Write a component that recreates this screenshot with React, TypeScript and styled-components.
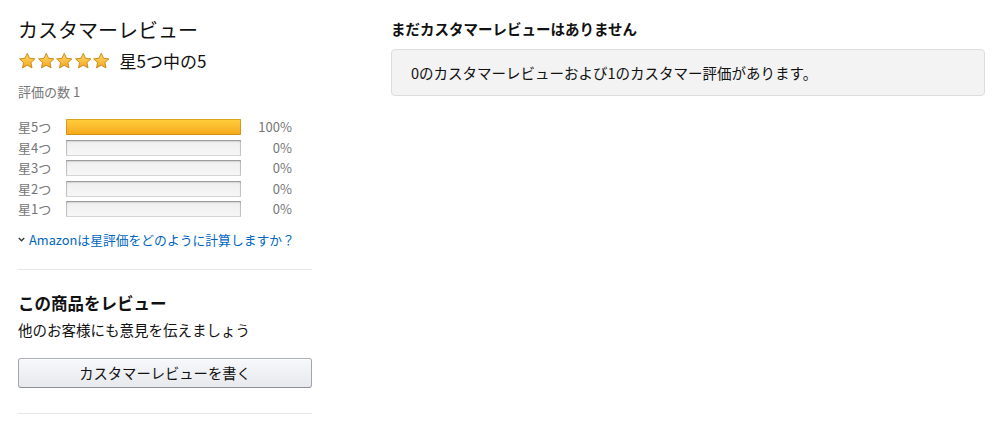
import React from 'react';
import styled, { createGlobalStyle } from 'styled-components';

const GlobalStyle = createGlobalStyle`
    body {
        margin: 0;
        background: #fff;
        font-family: 'Noto Sans CJK JP', 'Noto Sans', 'Liberation Sans', sans-serif;
        color: #111;
    }
`;

interface FillProps {
    percent: number;
}

const Page = styled.div`
    display: flex;
    flex-direction: row;
    align-items: flex-start;
    gap: 79px;
    padding: 16px 0 0 18px;
    width: 999px;
    height: 425px;
    box-sizing: border-box;
    overflow: hidden;
`;

const LeftColumn = styled.div`
    display: flex;
    flex-direction: column;
    width: 294px;
    flex-shrink: 0;
`;

const RightColumn = styled.div`
    display: flex;
    flex-direction: column;
    width: 594px;
`;

const Title = styled.h2`
    margin: 0;
    font-size: 20px;
    line-height: 28px;
    font-weight: 400;
    color: #111;
`;

const RatingRow = styled.div`
    display: flex;
    flex-direction: row;
    align-items: center;
    height: 24px;
    margin-top: 5px;
`;

const Stars = styled.div`
    display: flex;
    flex-direction: row;
    margin-right: 9px;
`;

const RatingText = styled.span`
    font-size: 17px;
    line-height: 24px;
    color: #111;
`;

const CountText = styled.div`
    margin-top: 9px;
    font-size: 13px;
    line-height: 20px;
    color: #767676;
`;

const Histogram = styled.div`
    display: flex;
    flex-direction: column;
    margin-top: 15px;
`;

const HistRow = styled.div`
    display: grid;
    grid-template-columns: 48px 175px 51px;
    align-items: center;
    height: 20.5px;
`;

const HistLabel = styled.span`
    font-size: 13px;
    line-height: 16px;
    color: #767676;
`;

const Meter = styled.div`
    height: 16px;
    box-sizing: border-box;
    border-radius: 1px;
    background: linear-gradient(to bottom, #eeeeee, #f7f7f7);
    box-shadow: inset 0 1px 2px rgba(0, 0, 0, 0.35), inset 0 0 0 1px rgba(0, 0, 0, 0.12);
    overflow: hidden;
`;

const MeterFill = styled.div<FillProps>`
    height: 100%;
    width: ${({ percent }) => percent}%;
    background: linear-gradient(to bottom, #ffce3d, #f6a81c);
    box-shadow: inset 0 0 0 1px rgba(170, 110, 0, 0.45);
    border-radius: 1px;
`;

const HistPercent = styled.span`
    text-align: right;
    font-size: 13px;
    line-height: 16px;
    color: #767676;
`;

const HowLink = styled.a`
    display: flex;
    flex-direction: row;
    align-items: center;
    gap: 4px;
    margin-top: 10px;
    font-size: 12.8px;
    line-height: 20px;
    color: #0066c0;
    text-decoration: none;
    cursor: pointer;
`;

const Divider = styled.hr`
    margin: 0;
    border: 0;
    height: 1px;
    background: #e7e7e7;
    width: 100%;
`;

const TopDivider = styled(Divider)`
    margin-top: 19px;
`;

const BottomDivider = styled(Divider)`
    margin-top: 25px;
`;

const SectionTitle = styled.h3`
    margin: 21px 0 0;
    font-size: 16.5px;
    line-height: 24px;
    font-weight: 700;
    color: #111;
`;

const SectionText = styled.div`
    margin-top: 4px;
    font-size: 14.5px;
    line-height: 22px;
    color: #111;
`;

const WriteButton = styled.button`
    margin-top: 17px;
    width: 100%;
    height: 30px;
    border: 1px solid;
    border-color: #adb1b8 #a2a6ac #8d9096;
    border-radius: 3px;
    background: linear-gradient(to bottom, #f7f8fa, #e7e9ec);
    box-shadow: inset 0 1px 0 rgba(255, 255, 255, 0.6);
    font-family: inherit;
    font-size: 14.3px;
    color: #111;
    cursor: pointer;
`;

const NoReviewTitle = styled.h3`
    margin: 2px 0 0;
    font-size: 14.5px;
    line-height: 22px;
    font-weight: 700;
    color: #111;
`;

const InfoBox = styled.div`
    margin-top: 9px;
    padding: 12px 19px;
    border: 1px solid #dddddd;
    border-radius: 4px;
    background: #f3f3f3;
    font-size: 14.5px;
    line-height: 21px;
    color: #111;
`;

const StarIcon: React.FC = () => (
    <svg width="18.5" height="18" viewBox="0 0 24 24">
        <defs>
            <linearGradient id="starFill" x1="0" y1="0" x2="0" y2="1">
                <stop offset="0" stopColor="#ffd964" />
                <stop offset="1" stopColor="#f3a722" />
            </linearGradient>
        </defs>
        <path
            d="M12 1.8l3.05 6.55 7.15.85-5.3 4.9 1.42 7.08L12 17.6l-6.32 3.58 1.42-7.08-5.3-4.9 7.15-.85z"
            fill="url(#starFill)"
            stroke="#c98a1c"
            strokeWidth="1.3"
            strokeLinejoin="round"
        />
    </svg>
);

const Chevron: React.FC = () => (
    <svg width="7" height="5" viewBox="0 0 7 5">
        <path d="M0.8 1 L3.5 3.8 L6.2 1" fill="none" stroke="#333" strokeWidth="1.3" />
    </svg>
);

const histogram = [
    { label: '星5つ', percent: 100 },
    { label: '星4つ', percent: 0 },
    { label: '星3つ', percent: 0 },
    { label: '星2つ', percent: 0 },
    { label: '星1つ', percent: 0 },
];

const App: React.FC = () => {
    return (
        <>
            <GlobalStyle />
            <Page>
                <LeftColumn>
                    <Title>カスタマーレビュー</Title>
                    <RatingRow>
                        <Stars>
                            {[0, 1, 2, 3, 4].map((i) => (
                                <StarIcon key={`star-${i}`} />
                            ))}
                        </Stars>
                        <RatingText>星5つ中の5</RatingText>
                    </RatingRow>
                    <CountText>評価の数 1</CountText>
                    <Histogram>
                        {histogram.map((row) => (
                            <HistRow key={row.label}>
                                <HistLabel>{row.label}</HistLabel>
                                <Meter>
                                    <MeterFill percent={row.percent} />
                                </Meter>
                                <HistPercent>{row.percent}%</HistPercent>
                            </HistRow>
                        ))}
                    </Histogram>
                    <HowLink>
                        <Chevron />
                        Amazonは星評価をどのように計算しますか？
                    </HowLink>
                    <TopDivider />
                    <SectionTitle>この商品をレビュー</SectionTitle>
                    <SectionText>他のお客様にも意見を伝えましょう</SectionText>
                    <WriteButton>カスタマーレビューを書く</WriteButton>
                    <BottomDivider />
                </LeftColumn>
                <RightColumn>
                    <NoReviewTitle>まだカスタマーレビューはありません</NoReviewTitle>
                    <InfoBox>0のカスタマーレビューおよび1のカスタマー評価があります。</InfoBox>
                </RightColumn>
            </Page>
        </>
    );
};

export default App;
